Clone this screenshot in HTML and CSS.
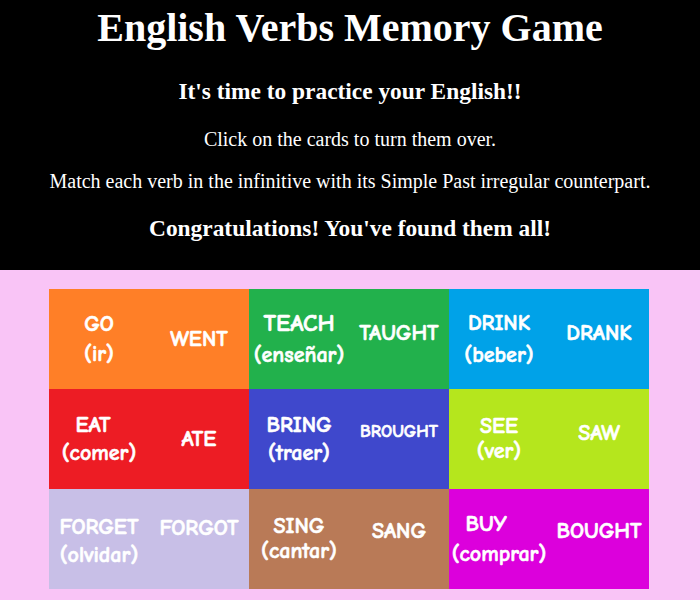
FILE: index.html
```html
<!DOCTYPE html>
<html lang="en">
<head>
<meta charset="utf-8">
<title>English Verbs Memory Game</title>
<link rel="stylesheet" href="styles.css">
</head>
<body>
<header class="intro">
  <h1 class="title">English Verbs Memory Game</h1>
  <h3 class="lead">It's time to practice your English!!</h3>
  <p class="info info-first">Click on the cards to turn them over.</p>
  <p class="info">Match each verb in the infinitive with its Simple Past irregular counterpart.</p>
  <h3 class="done">Congratulations! You've found them all!</h3>
</header>
<main class="board">
  <div class="grid">
    <div class="pair orange">
      <div class="card"><span>GO</span><span>(ir)</span></div>
      <div class="card"><span>WENT</span></div>
    </div>
    <div class="pair green">
      <div class="card loose"><span class="big">TEACH</span><span>(enseñar)</span></div>
      <div class="card raise-s"><span>TAUGHT</span></div>
    </div>
    <div class="pair blue">
      <div class="card loose"><span>DRINK</span><span>(beber)</span></div>
      <div class="card raise-s"><span>DRANK</span></div>
    </div>
    <div class="pair red">
      <div class="card snug"><span class="nudge-left">EAT</span><span>(comer)</span></div>
      <div class="card"><span>ATE</span></div>
    </div>
    <div class="pair indigo">
      <div class="card snug"><span>BRING</span><span>(traer)</span></div>
      <div class="card small raise-m"><span>BROUGHT</span></div>
    </div>
    <div class="pair lime">
      <div class="card tight"><span>SEE</span><span>(ver)</span></div>
      <div class="card raise-s"><span>SAW</span></div>
    </div>
    <div class="pair lavender">
      <div class="card snug drop"><span>FORGET</span><span>(olvidar)</span></div>
      <div class="card raise-l"><span>FORGOT</span></div>
    </div>
    <div class="pair brown">
      <div class="card tight"><span>SING</span><span>(cantar)</span></div>
      <div class="card raise-m"><span>SANG</span></div>
    </div>
    <div class="pair magenta">
      <div class="card"><span class="nudge-left-l">BUY</span><span>(comprar)</span></div>
      <div class="card raise-m"><span>BOUGHT</span></div>
    </div>
  </div>
</main>
</body>
</html>
```
FILE: styles.css
```css
html, body {
  margin: 0;
  padding: 0;
}
body {
  background: #f9c4f6;
  min-height: 600px;
}
.intro {
  background: #000;
  color: #fff;
  font-family: "Liberation Serif", "Times New Roman", serif;
  text-align: center;
  padding: 5px 0 28px;
}
.title {
  margin: 0;
  font-size: 40px;
  line-height: 46px;
  font-weight: bold;
}
.lead {
  margin: 27px 0 0;
  font-size: 23.4px;
  line-height: 27px;
  font-weight: bold;
}
.info {
  margin: 19px 0 0;
  font-size: 20px;
  line-height: 23px;
}
.info-first {
  margin-top: 23px;
}
.done {
  margin: 22px 0 0;
  font-size: 23.4px;
  line-height: 27px;
  font-weight: bold;
}
.board {
  padding: 19px 0 0 49px;
}
.grid {
  display: grid;
  grid-template-columns: repeat(3, 200px);
  grid-template-rows: repeat(3, 100px);
  width: 600px;
}
.pair {
  display: flex;
}
.card {
  width: 100px;
  box-sizing: border-box;
  display: flex;
  flex-direction: column;
  align-items: center;
  justify-content: center;
  color: #fff;
  font-family: "Comic Neue", "Comic Sans MS", cursive;
  font-weight: 700;
  font-size: 22px;
  line-height: 30px;
  white-space: nowrap;
  -webkit-text-stroke: 0.6px #fff;
}
.card.small {
  font-size: 17.5px;
}
.card .big {
  font-size: 24px;
}
.card.loose { line-height: 32px; }
.card.snug { line-height: 28px; }
.card.tight { line-height: 25px; }
.card.drop { padding-top: 4px; }
.card.raise-s { padding-bottom: 12px; }
.card.raise-m { padding-bottom: 16px; }
.card.raise-l { padding-bottom: 22px; }
.nudge-left { margin-right: 12px; }
.nudge-left-l { margin-right: 26px; }
.orange { background: #ff7f27; }
.green { background: #22b14c; }
.blue { background: #00a2e8; }
.red { background: #ed1c24; }
.indigo { background: #3f48cc; }
.lime { background: #b5e61d; }
.lavender { background: #c8bfe7; }
.brown { background: #b97a57; }
.magenta { background: #dc00dc; }
```
